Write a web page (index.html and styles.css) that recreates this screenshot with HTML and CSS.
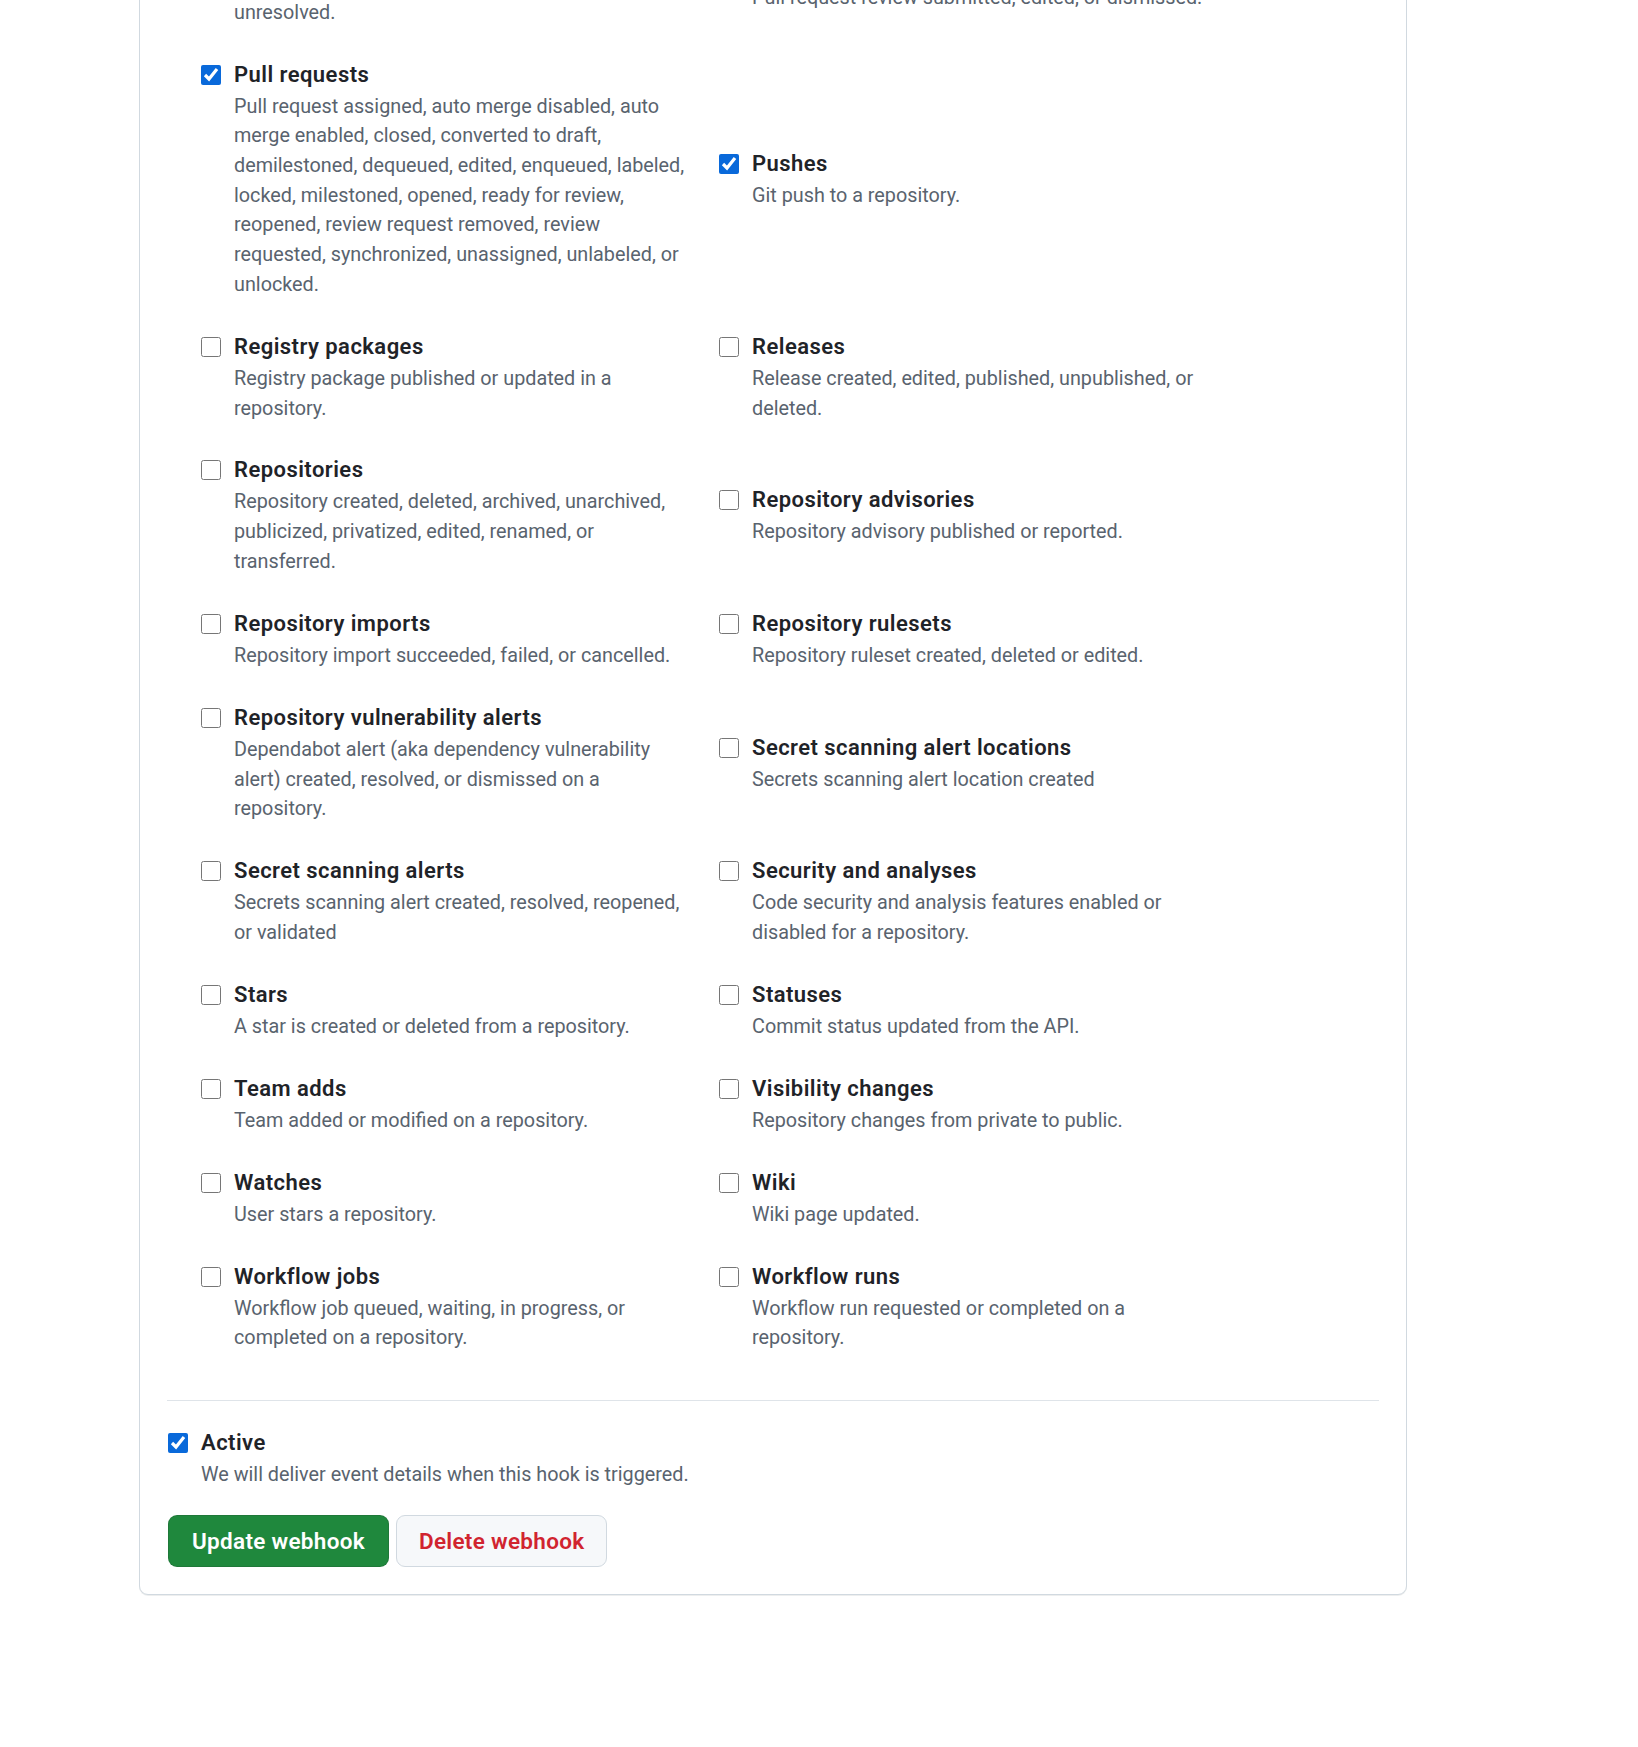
FILE: index.html
```html
<!DOCTYPE html>
<html lang="en">
<head>
<meta charset="utf-8">
<title>Webhook events</title>
<link rel="stylesheet" href="styles.css">
</head>
<body>
<main class="page">
  <form class="card">
    <div class="events">
      <label class="event">
        <input type="checkbox" class="check">
        <span class="event-text">
          <span class="event-title">Pull request review threads</span>
          <span class="event-desc">Pull request review thread marked as resolved or unresolved.</span>
        </span>
      </label>
      <label class="event">
        <input type="checkbox" class="check">
        <span class="event-text">
          <span class="event-title">Pull request reviews</span>
          <span class="event-desc">Pull request review submitted, edited, or dismissed.</span>
        </span>
      </label>

      <label class="event">
        <input type="checkbox" class="check" checked>
        <span class="event-text">
          <span class="event-title">Pull requests</span>
          <span class="event-desc">Pull request assigned, auto merge disabled, auto merge enabled, closed, converted to draft, demilestoned, dequeued, edited, enqueued, labeled, locked, milestoned, opened, ready for review, reopened, review request removed, review requested, synchronized, unassigned, unlabeled, or unlocked.</span>
        </span>
      </label>
      <label class="event">
        <input type="checkbox" class="check" checked>
        <span class="event-text">
          <span class="event-title">Pushes</span>
          <span class="event-desc">Git push to a repository.</span>
        </span>
      </label>

      <label class="event">
        <input type="checkbox" class="check">
        <span class="event-text">
          <span class="event-title">Registry packages</span>
          <span class="event-desc">Registry package published or updated in a repository.</span>
        </span>
      </label>
      <label class="event">
        <input type="checkbox" class="check">
        <span class="event-text">
          <span class="event-title">Releases</span>
          <span class="event-desc">Release created, edited, published, unpublished, or deleted.</span>
        </span>
      </label>

      <label class="event">
        <input type="checkbox" class="check">
        <span class="event-text">
          <span class="event-title">Repositories</span>
          <span class="event-desc">Repository created, deleted, archived, unarchived, publicized, privatized, edited, renamed, or transferred.</span>
        </span>
      </label>
      <label class="event">
        <input type="checkbox" class="check">
        <span class="event-text">
          <span class="event-title">Repository advisories</span>
          <span class="event-desc">Repository advisory published or reported.</span>
        </span>
      </label>

      <label class="event">
        <input type="checkbox" class="check">
        <span class="event-text">
          <span class="event-title">Repository imports</span>
          <span class="event-desc">Repository import succeeded, failed, or cancelled.</span>
        </span>
      </label>
      <label class="event">
        <input type="checkbox" class="check">
        <span class="event-text">
          <span class="event-title">Repository rulesets</span>
          <span class="event-desc">Repository ruleset created, deleted or edited.</span>
        </span>
      </label>

      <label class="event">
        <input type="checkbox" class="check">
        <span class="event-text">
          <span class="event-title">Repository vulnerability alerts</span>
          <span class="event-desc">Dependabot alert (aka dependency vulnerability alert) created, resolved, or dismissed on a repository.</span>
        </span>
      </label>
      <label class="event">
        <input type="checkbox" class="check">
        <span class="event-text">
          <span class="event-title">Secret scanning alert locations</span>
          <span class="event-desc">Secrets scanning alert location created</span>
        </span>
      </label>

      <label class="event">
        <input type="checkbox" class="check">
        <span class="event-text">
          <span class="event-title">Secret scanning alerts</span>
          <span class="event-desc">Secrets scanning alert created, resolved, reopened, or validated</span>
        </span>
      </label>
      <label class="event">
        <input type="checkbox" class="check">
        <span class="event-text">
          <span class="event-title">Security and analyses</span>
          <span class="event-desc">Code security and analysis features enabled or disabled for a repository.</span>
        </span>
      </label>

      <label class="event">
        <input type="checkbox" class="check">
        <span class="event-text">
          <span class="event-title">Stars</span>
          <span class="event-desc">A star is created or deleted from a repository.</span>
        </span>
      </label>
      <label class="event">
        <input type="checkbox" class="check">
        <span class="event-text">
          <span class="event-title">Statuses</span>
          <span class="event-desc">Commit status updated from the API.</span>
        </span>
      </label>

      <label class="event">
        <input type="checkbox" class="check">
        <span class="event-text">
          <span class="event-title">Team adds</span>
          <span class="event-desc">Team added or modified on a repository.</span>
        </span>
      </label>
      <label class="event">
        <input type="checkbox" class="check">
        <span class="event-text">
          <span class="event-title">Visibility changes</span>
          <span class="event-desc">Repository changes from private to public.</span>
        </span>
      </label>

      <label class="event">
        <input type="checkbox" class="check">
        <span class="event-text">
          <span class="event-title">Watches</span>
          <span class="event-desc">User stars a repository.</span>
        </span>
      </label>
      <label class="event">
        <input type="checkbox" class="check">
        <span class="event-text">
          <span class="event-title">Wiki</span>
          <span class="event-desc">Wiki page updated.</span>
        </span>
      </label>

      <label class="event">
        <input type="checkbox" class="check">
        <span class="event-text">
          <span class="event-title">Workflow jobs</span>
          <span class="event-desc">Workflow job queued, waiting, in progress, or completed on a repository.</span>
        </span>
      </label>
      <label class="event">
        <input type="checkbox" class="check">
        <span class="event-text">
          <span class="event-title">Workflow runs</span>
          <span class="event-desc">Workflow run requested or completed on a repository.</span>
        </span>
      </label>
    </div>

    <hr class="divider">

    <label class="active">
      <input type="checkbox" class="check" checked>
      <span class="event-text">
        <span class="event-title">Active</span>
        <span class="event-desc">We will deliver event details when this hook is triggered.</span>
      </span>
    </label>

    <div class="actions">
      <button type="button" class="btn btn-primary">Update webhook</button>
      <button type="button" class="btn btn-danger">Delete webhook</button>
    </div>
  </form>
</main>
</body>
</html>
```

FILE: styles.css
```css
html, body {
  margin: 0;
  padding: 0;
  background: #ffffff;
}

body {
  font-family: Roboto, "Noto Sans", "Liberation Sans", sans-serif;
  color: #1f2328;
  overflow: hidden;
  height: 1747px;
}

.page {
  padding-left: 139px;
}

.card {
  width: 1212px;
  margin-top: -94px;
  border: 1px solid #d1d9e0;
  border-radius: 9px;
  padding: 27px;
  box-shadow: 0 1px 0 rgba(31, 35, 40, 0.08);
  background: #ffffff;
}

.events {
  display: grid;
  grid-template-columns: 518px 518px;
  align-items: center;
  row-gap: 30.25px;
  margin-left: 34px;
}

.event,
.active {
  display: flex;
  align-items: flex-start;
  gap: 13px;
}

.active {
  margin-left: 1px;
}

.check {
  width: 20px;
  height: 20px;
  margin: 7px 0 0 0;
  flex: none;
  accent-color: #0969da;
}

.event-text {
  display: flex;
  flex-direction: column;
  width: 457px;
}

.event-title {
  font-size: 22px;
  line-height: 34px;
  font-weight: 600;
  letter-spacing: 0.45px;
  color: #1f2328;
}

.event-desc {
  font-size: 19.8px;
  line-height: 29.7px;
  color: #59636e;
}

.active .event-text {
  width: auto;
}

.divider {
  margin: 47px 0 25px 0;
  border: 0;
  border-top: 1px solid #dfe4e9;
  height: 0;
}

.actions {
  display: flex;
  gap: 7px;
  margin-top: 25px;
  margin-left: 1px;
}

.btn {
  height: 52.5px;
  padding: 0 23px;
  border-radius: 9px;
  font-family: inherit;
  font-size: 22.5px;
  font-weight: 600;
  letter-spacing: 0.3px;
  line-height: 30px;
  cursor: pointer;
}

.btn-primary {
  background: #1f883d;
  color: #ffffff;
  border: 1px solid rgba(31, 35, 40, 0.15);
}

.btn-danger {
  padding: 0 22px;
  background: #f6f8fa;
  color: #d1242f;
  border: 1px solid #d1d9e0;
}
```
